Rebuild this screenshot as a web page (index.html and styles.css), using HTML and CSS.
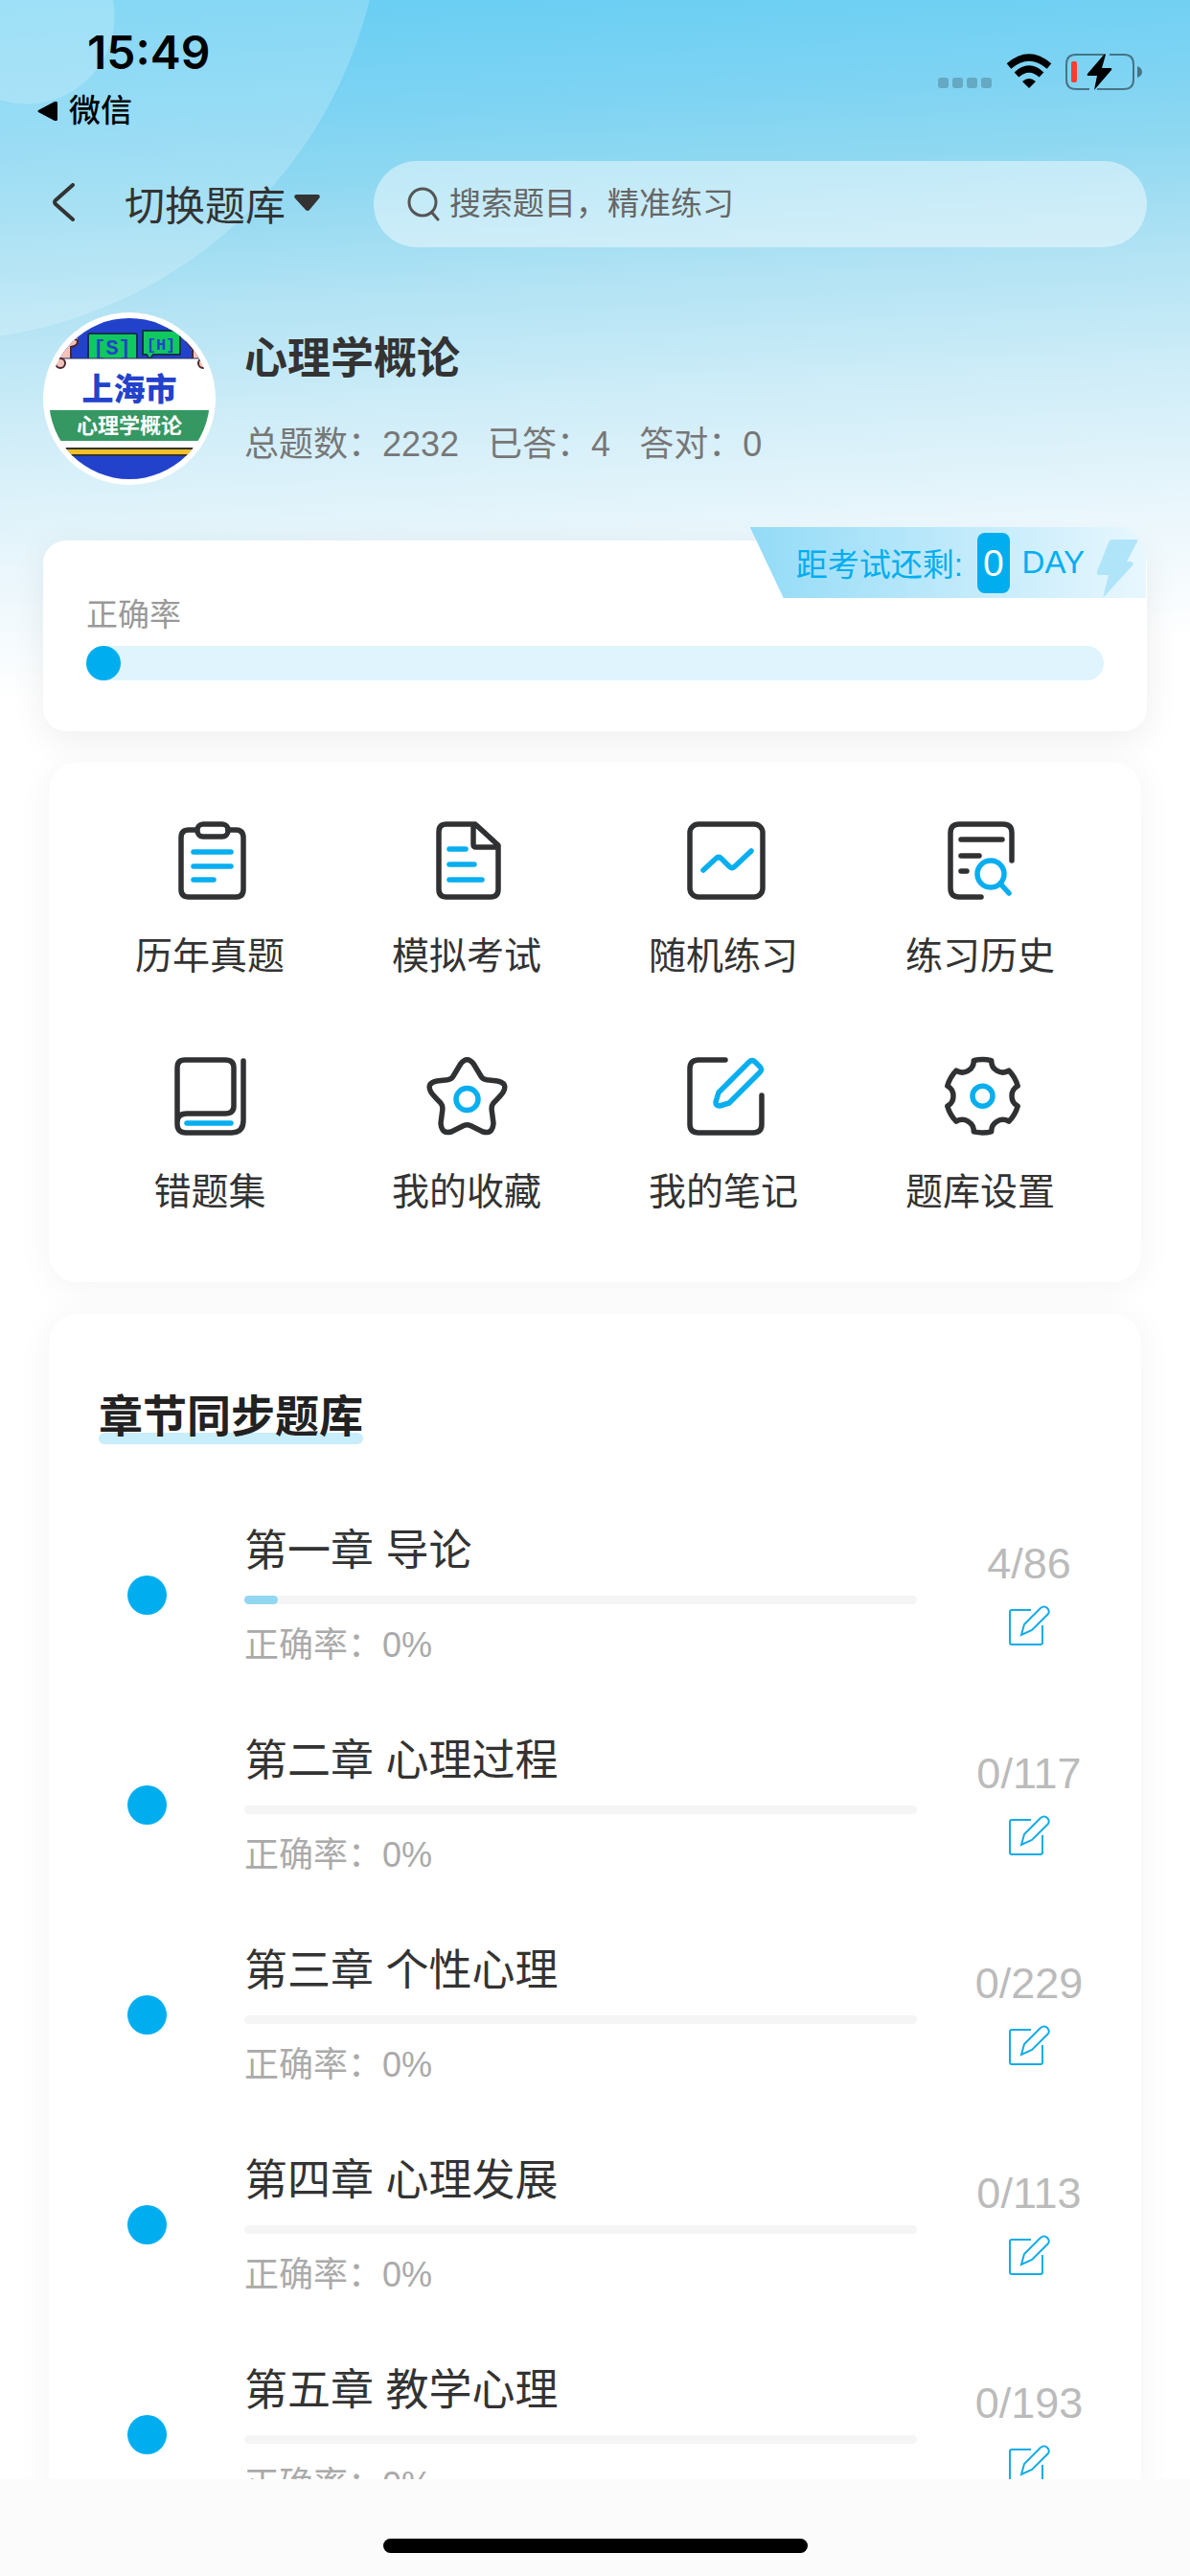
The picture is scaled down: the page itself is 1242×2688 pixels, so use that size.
FILE: index.html
```html
<!DOCTYPE html>
<html lang="zh-CN">
<head>
    <meta charset="UTF-8">
    <meta name="viewport" content="width=device-width, initial-scale=1.0">
    <title>心理学概论</title>
    <link rel="stylesheet" href="styles.css">
</head>
<body>

    <!-- reusable edit icon -->
    <svg class="defs" width="0" height="0">
        <symbol id="edit" viewBox="0 0 48 48">
            <path d="M26 5H6a2 2 0 0 0-2 2v32a2 2 0 0 0 2 2h30a2 2 0 0 0 2-2V21"/>
            <path d="M16 31l3-11L36 3q4-3 7 0t1 6L27 26z"/>
        </symbol>
    </svg>

    <main class="page">
        <header class="status">
            <div class="status-left">
                <div class="time">15:49</div>
                <a class="back-app" href="#">
                    <svg width="21" height="20" viewBox="0 0 21 20"><path d="M1 9L18 0q3-1 3 2v16q0 3-3 2L1 11q-1-1 0-2z"/></svg>
                    微信
                </a>
            </div>
            <div class="status-right">
                <svg width="57" height="38" viewBox="0 0 57 38" fill="#000" fill-opacity=".2">
                    <rect x="0" y="25" width="11" height="11" rx="3"/>
                    <rect x="15" y="25" width="11" height="11" rx="3"/>
                    <rect x="30" y="25" width="11" height="11" rx="3"/>
                    <rect x="45" y="25" width="11" height="11" rx="3"/>
                </svg>
                <svg width="48" height="38" viewBox="0 0 48 38">
                    <path d="M3 13Q24-5 45 13" fill="none" stroke="#000" stroke-width="7"/>
                    <path d="M11 22Q24 10 37 22" fill="none" stroke="#000" stroke-width="7"/>
                    <path d="M17 29Q24 23 31 29L24 36z"/>
                </svg>
                <svg width="80" height="38" viewBox="0 0 80 38">
                    <path d="M40 1H11Q1 1 1 11V27Q1 37 11 37H25M46 1H61Q71 1 71 11V27Q71 37 61 37H33" fill="none" stroke="#000" stroke-opacity=".45" stroke-width="2"/>
                    <path d="M75 13Q80 15 80 19T75 25z" fill-opacity=".45"/>
                    <rect x="6" y="8" width="6" height="22" rx="2" fill="#ff3b30"/>
                    <path d="M41 0L23 21q-1 2 1 2h9L30 38 48 17q1-2-1-2H38L42 1z"/>
                </svg>
            </div>
        </header>

        <nav class="nav">
            <button class="back" aria-label="返回">
                <svg width="23" height="40" viewBox="0 0 23 40"><path d="M21 2L3 18q-2 2 0 4L21 38"/></svg>
            </button>
            <button class="switch">
                切换题库
                <svg width="27" height="17" viewBox="0 0 27 17"><path d="M2 0H25q3 1 1 4L16 16q-2 2-4 0L1 4Q-1 1 2 0z"/></svg>
            </button>
            <label class="search">
                <svg width="34" height="36" viewBox="0 0 34 36"><circle cx="16" cy="16" r="14"/><path d="M26 27l6 7"/></svg>
                <input type="text" placeholder="搜索题目，精准练习" aria-label="搜索题目">
            </label>
        </nav>

        <section class="profile">
            <svg class="avatar" viewBox="0 0 180 180">
                <clipPath id="round"><circle cx="90" cy="90" r="84"/></clipPath>
                <circle cx="90" cy="90" r="90" fill="#fff"/>
                <g clip-path="url(#round)">
                    <rect width="180" height="48" fill="#2342cc"/>
                    <path d="M8 48V28Q26 22 36 27q2 7-6 8l-2 13zM172 48V28Q158 24 150 30q5 4 6 18z" fill="#f3c3b8"/>
                    <g fill="none" stroke="#4a2730" stroke-width="2">
                        <path d="M8 48V32Q24 24 36 29q1 6-7 7v12"/>
                        <path d="M172 48V30Q158 24 150 31l6 8v9"/>
                    </g>
                    <rect x="47" y="22" width="51" height="30" rx="2" fill="#10c860" stroke="#12324e" stroke-width="2"/>
                    <path d="M104 19h39v25h-28l-4 5-3-5h-4z" fill="#10c860" stroke="#12324e" stroke-width="2"/>
                    <text class="tag" x="72" y="44">[S]</text>
                    <text class="tag small" x="123" y="39">[H]</text>
                    <rect y="48" width="180" height="94" fill="#fff"/>
                    <path d="M0 48H180" stroke="#26335c"/>
                    <g fill="#f3c3b8" stroke="#4a2730" stroke-width="2">
                        <circle cx="18" cy="53" r="5"/>
                        <circle cx="167" cy="53" r="5"/>
                    </g>
                    <rect y="102" width="180" height="32" fill="#359762"/>
                    <rect y="142" width="180" height="38" fill="#2342cc"/>
                    <rect y="142" width="180" height="7" fill="#f2c028" stroke="#333" stroke-width="2"/>
                    <text class="city" x="90" y="92">上海市</text>
                    <text class="course" x="90" y="126">心理学概论</text>
                </g>
            </svg>
            <div class="info">
                <h1>心理学概论</h1>
                <div class="stats">
                    <span>总题数：2232</span>
                    <span>已答：4</span>
                    <span>答对：0</span>
                </div>
            </div>
        </section>

        <section class="score">
            <div class="ribbon">
                <span>距考试还剩:</span>
                <b>0</b>
                <span>DAY</span>
                <svg width="44" height="61" viewBox="0 0 44 61"><path d="M17 0H41q3 0 2 2L32 23h4q4 1 2 4L7 61 13 37H3q-3 0-2-4L13 3q1-3 4-3z"/></svg>
            </div>
            <p>正确率</p>
            <div class="track"><div class="knob"></div></div>
        </section>

        <section class="menu">
            <a href="#">
                <svg class="icon" viewBox="-1 0 90 90">
                    <path d="M30 13H22q-8 0-8 8v54q0 8 8 8H71q8 0 8-8V21q0-8-8-8H63"/>
                    <rect x="31" y="7" width="32" height="13" rx="6"/>
                    <path class="blue" d="M27 36H66M27 51H66M27 65H48"/>
                </svg>
                历年真题
            </a>
            <a href="#">
                <svg class="icon" viewBox="-2 0 90 90">
                    <path d="M52 7H22q-8 0-8 8v60q0 8 8 8H68q8 0 8-8V29zM50 7V28q0 3 3 3H75"/>
                    <path class="blue" d="M25 33H42M25 49H51M25 65H59"/>
                </svg>
                模拟考试
            </a>
            <a href="#">
                <svg class="icon" viewBox="-1 0 90 90">
                    <rect x="9" y="7" width="76" height="76" rx="9"/>
                    <path class="blue" d="M23 55L36 43q3-3 6 0l8 8q3 3 6 0L73 35"/>
                </svg>
                随机练习
            </a>
            <a href="#">
                <svg class="icon" viewBox="-2 0 90 90">
                    <path d="M44 83H21q-9 0-9-9V16q0-9 9-9H67q9 0 9 9V45M23 23H66M23 40H42M23 56H29"/>
                    <circle class="blue" cx="54" cy="59" r="14"/>
                    <path class="blue" d="M64 69L73 79"/>
                </svg>
                练习历史
            </a>
            <a href="#">
                <svg class="icon" viewBox="-1 0 90 90">
                    <path d="M79 8V70q0 13-12 13H19q-9 0-9-9V15q0-8 8-8H60q9 0 9 8V55q0 8-9 8H20q-10 0-10 9"/>
                    <path class="blue" d="M20 73H66"/>
                </svg>
                错题集
            </a>
            <a href="#">
                <svg class="icon" viewBox="-2 0 90 90">
                    <path d="M36.500 11.500Q43.500 2 50.500 11.500L58 24Q59.500 27 64 27.700L75 29Q86 31 81.500 40 80 43 71 52 68.500 55 69.300 60L71 73Q70 85 60 82L47 75.500Q43.500 74 40 75.500L27 82Q17 85 16 73L17.700 60Q18.500 55 16 52 7 43 5.500 40 1 31 12 29L23 27.700Q27.500 27 29 24z"/>
                    <circle class="blue" cx="43.500" cy="48" r="11.500"/>
                </svg>
                我的收藏
            </a>
            <a href="#">
                <svg class="icon" viewBox="-1 0 90 90">
                    <path d="M46 7H18q-9 0-9 9V74q0 9 9 9H75q9 0 9-9V44"/>
                    <path class="blue" d="M39 41L71 9q3-3 6 0l5 5q3 3 0 6L50 52 40 55q-4 0-4-4z"/>
                </svg>
                我的笔记
            </a>
            <a href="#">
                <svg class="icon" viewBox="-2 0 90 90">
                    <path transform="translate(45.500 44.700)" d="M36.700 10.500A38 38 0 0 1 27.500 26.500 12 12 0 0 0 9.200 37.100 38 38 0 0 1-9.200 37.100 12 12 0 0 0-27.500 26.500 38 38 0 0 1-36.700 10.500 12 12 0 0 0-36.700-10.500 38 38 0 0 1-27.500-26.500 12 12 0 0 0-9.200-37.100 38 38 0 0 1 9.200-37.100 12 12 0 0 0 27.500-26.500 38 38 0 0 1 36.700-10.500 12 12 0 0 0 36.700 10.500z"/>
                    <circle class="blue" cx="45.500" cy="44.700" r="10.500"/>
                </svg>
                题库设置
            </a>
        </section>

        <section class="chapters">
            <h2>章节同步题库</h2>
            <ul>
                <li>
                    <i class="dot"></i>
                    <div class="detail">
                        <h3>第一章 导论</h3>
                        <div class="bar"><div class="fill" style="width: 5%"></div></div>
                        <p>正确率：0%</p>
                    </div>
                    <div class="count">4/86<button aria-label="练习"><svg><use href="#edit"/></svg></button></div>
                </li>
                <li>
                    <i class="dot"></i>
                    <div class="detail">
                        <h3>第二章 心理过程</h3>
                        <div class="bar"></div>
                        <p>正确率：0%</p>
                    </div>
                    <div class="count">0/117<button aria-label="练习"><svg><use href="#edit"/></svg></button></div>
                </li>
                <li>
                    <i class="dot"></i>
                    <div class="detail">
                        <h3>第三章 个性心理</h3>
                        <div class="bar"></div>
                        <p>正确率：0%</p>
                    </div>
                    <div class="count">0/229<button aria-label="练习"><svg><use href="#edit"/></svg></button></div>
                </li>
                <li>
                    <i class="dot"></i>
                    <div class="detail">
                        <h3>第四章 心理发展</h3>
                        <div class="bar"></div>
                        <p>正确率：0%</p>
                    </div>
                    <div class="count">0/113<button aria-label="练习"><svg><use href="#edit"/></svg></button></div>
                </li>
                <li>
                    <i class="dot"></i>
                    <div class="detail">
                        <h3>第五章 教学心理</h3>
                        <div class="bar"></div>
                        <p>正确率：0%</p>
                    </div>
                    <div class="count">0/193<button aria-label="练习"><svg><use href="#edit"/></svg></button></div>
                </li>
            </ul>
        </section>
    </main>

    <footer class="home">
        <div class="home-line"></div>
    </footer>

</body>
</html>
```
FILE: styles.css
```css
* {
    box-sizing: border-box;
}
body {
    margin: 0;
    height: 100vh;
    display: flex;
    flex-direction: column;
    background: #fff;
    color: #333;
    font-family: "Liberation Sans", "Noto Sans CJK SC", sans-serif;
}
h1, h2, h3, p, ul {
    margin: 0;
    padding: 0;
}
button {
    padding: 0;
    border: 0;
    background: none;
    font: inherit;
    color: inherit;
}
a {
    color: inherit;
    text-decoration: none;
}
svg {
    display: block;
    flex: none;
}
.defs {
    position: absolute;
}
.page {
    flex: 1;
    min-height: 0;
    overflow: hidden;
    background:
        radial-gradient(circle at 28px 17px, rgba(255, 255, 255, .2) 91px, transparent 92px),
        radial-gradient(circle at -69px -113px, rgba(255, 255, 255, .2) 468px, transparent 469px),
        linear-gradient(177deg, #66cef3 0, #7dd3f3 130px, #8fd8f1 210px, #b3e3f4 330px, #cfedf8 450px, #e9f6fc 590px, #fff 730px);
}

/* status bar */
.status {
    display: flex;
    justify-content: space-between;
    padding: 26px 50px 32px 39px;
    color: #000;
}
.time {
    margin-left: 52px;
    font-family: Inter, sans-serif;
    font-size: 48px;
    font-weight: 600;
    line-height: 58px;
}
.back-app {
    display: flex;
    align-items: center;
    gap: 12px;
    margin-top: 12px;
    font-size: 33px;
    font-weight: 500;
    line-height: 40px;
}
.status-right {
    display: flex;
    gap: 14px;
    margin-top: 30px;
}

/* top nav */
.nav {
    display: flex;
    align-items: center;
    padding: 0 45px 0 55px;
}
.back,
.switch {
    padding-bottom: 4px;
}
.back path,
.search svg {
    fill: none;
    stroke: #333;
    stroke-width: 4;
    stroke-linecap: round;
}
.search svg {
    stroke: #555;
    stroke-width: 3;
}
.switch {
    display: flex;
    align-items: center;
    gap: 9px;
    margin: 0 56px 0 52px;
    font-size: 42px;
}
.switch svg {
    fill: #333;
}
.search {
    flex: 1;
    display: flex;
    align-items: center;
    gap: 10px;
    height: 90px;
    padding: 0 35px;
    border-radius: 45px;
    background: rgba(255, 255, 255, .45);
}
.search input {
    flex: 1;
    min-width: 0;
    padding: 0;
    border: 0;
    outline: 0;
    background: none;
    font: inherit;
    font-size: 33px;
}
.search input::placeholder {
    color: #666;
    opacity: 1;
}

/* course info */
.profile {
    display: flex;
    align-items: center;
    gap: 30px;
    padding: 68px 45px 58px;
}
.avatar {
    width: 180px;
    height: 180px;
}
.avatar text {
    text-anchor: middle;
    font-weight: bold;
    font-family: "Noto Sans CJK SC", sans-serif;
}
.avatar .tag {
    font-family: "Liberation Mono", monospace;
    font-size: 22px;
    fill: #2342cc;
}
.avatar .small {
    font-size: 17px;
}
.avatar .city {
    font-size: 33px;
    font-weight: 900;
    fill: #2342cc;
}
.avatar .course {
    font-size: 22px;
    fill: #fff;
}
.info h1 {
    font-size: 45px;
    font-weight: 600;
    line-height: 64px;
}
.stats {
    display: flex;
    gap: 30px;
    margin-top: 32px;
    font-size: 36px;
    line-height: 50px;
    color: #777;
}

/* accuracy card */
.score {
    position: relative;
    margin: 0 45px;
    padding: 54px 45px 53px;
    border-radius: 24px;
    background: #fff;
    box-shadow: 0 8px 36px rgba(0, 0, 0, .07);
}
.score p {
    font-size: 33px;
    line-height: 48px;
    color: #999;
}
.ribbon {
    position: absolute;
    top: -14px;
    right: 1px;
    display: flex;
    align-items: center;
    height: 74px;
    padding: 0 8px 0 48px;
    border-top-right-radius: 30px;
    background: linear-gradient(to right, #93dbf7, #e8f7fe);
    clip-path: polygon(0 0, 100% 0, 100% 100%, 35px 100%);
    font-size: 33px;
    color: #00aeef;
}
.ribbon b {
    margin: 0 13px 0 15px;
    padding: 0 6px;
    border-radius: 8px;
    background: #00aeef;
    color: #fff;
    font-size: 39px;
    font-weight: normal;
    line-height: 63px;
}
.ribbon svg {
    align-self: flex-end;
    margin-left: 12px;
    fill: #b0e5f9;
}
.track {
    height: 36px;
    margin-top: 8px;
    border-radius: 18px;
    background: #dff4fd;
}
.knob {
    width: 36px;
    height: 36px;
    border-radius: 50%;
    background: #00aeef;
}

/* menu grid */
.menu {
    display: grid;
    grid-template-columns: repeat(4, 1fr);
    row-gap: 74px;
    margin: 32px 51px 0;
    padding: 58px 34px 67px;
    border-radius: 30px;
    background: #fff;
    box-shadow: 0 4px 36px rgba(0, 0, 0, .05);
}
.menu a {
    display: flex;
    flex-direction: column;
    align-items: center;
    gap: 28px;
    font-size: 39px;
    line-height: 54px;
}
.icon {
    width: 90px;
    height: 90px;
    fill: none;
    stroke: #303133;
    stroke-width: 5.500;
    stroke-linecap: round;
    stroke-linejoin: round;
}
.icon .blue {
    stroke: #08aeef;
}

/* chapter list */
.chapters {
    margin: 33px 51px 0;
    padding: 77px 0 60px;
    border-radius: 30px;
    background: #fff;
    box-shadow: 0 4px 36px rgba(0, 0, 0, .05);
}
.chapters h2 {
    position: relative;
    z-index: 0;
    width: fit-content;
    margin-left: 52px;
    font-size: 46px;
    line-height: 60px;
    color: #222;
}
.chapters h2::after {
    content: "";
    position: absolute;
    z-index: -1;
    left: 0;
    right: 0;
    bottom: 1px;
    height: 12px;
    border-radius: 6px;
    background: #c8edfb;
}
.chapters ul {
    display: flex;
    flex-direction: column;
    gap: 64px;
    margin-top: 79px;
    list-style: none;
}
.chapters li {
    display: flex;
    align-items: center;
    padding-left: 82px;
}
.dot {
    width: 41px;
    height: 41px;
    margin-right: 81px;
    border-radius: 50%;
    background: #00aeef;
}
.detail {
    flex: 1;
}
.detail h3 {
    font-size: 45px;
    font-weight: normal;
    line-height: 64px;
}
.bar {
    height: 9px;
    margin: 14px 0 18px;
    border-radius: 5px;
    background: #f5f5f5;
}
.fill {
    height: 9px;
    border-radius: 5px;
    background: #91d7f1;
}
.detail p {
    font-size: 36px;
    line-height: 50px;
    color: #aaa;
}
.count {
    display: flex;
    flex-direction: column;
    align-items: center;
    gap: 18px;
    width: 234px;
    font-size: 45px;
    line-height: 50px;
    color: #bbb;
}
.count svg {
    width: 48px;
    height: 48px;
    fill: none;
    stroke: #12ace8;
    stroke-width: 2;
}

/* home indicator */
.home {
    padding: 62px 0 24px;
    background: #fbfbfb;
}
.home-line {
    width: 443px;
    height: 15px;
    margin: 0 auto;
    border-radius: 8px;
    background: #000;
}
```
